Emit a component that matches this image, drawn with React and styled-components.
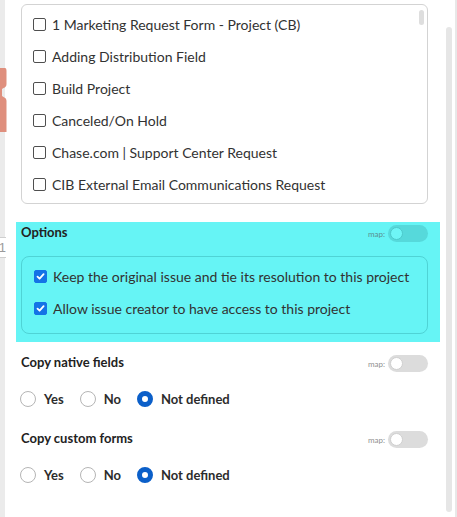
import React from "react";
import styled, { createGlobalStyle } from "styled-components";

const GlobalStyle = createGlobalStyle`
  html, body {
    margin: 0;
    padding: 0;
    background: #ffffff;
  }
  body {
    font-family: Lato, "Noto Sans", sans-serif;
    color: #323232;
  }
`;

const Page = styled.div`
  display: flex;
  width: 457px;
  height: 517px;
  overflow: hidden;
  background: #ffffff;
`;

const Gutter = styled.div`
  position: relative;
  width: 5px;
  flex: none;
  background: #ebebeb;
  display: flex;
  flex-direction: column;
  padding-top: 68px;
  z-index: 1;
`;

const Blob = styled.svg`
  display: block;
  width: 7px;
  height: 64px;
`;

const CutInput = styled.div`
  margin-top: 105px;
  width: 6px;
  height: 21px;
  box-sizing: border-box;
  border-top: 1px solid #cfcfcf;
  border-bottom: 1px solid #cfcfcf;
  background: #ffffff;
  color: #9a9a9a;
  font-family: "Liberation Sans", sans-serif;
  font-size: 13px;
  line-height: 19px;
  display: flex;
  justify-content: flex-end;
  overflow: hidden;
`;

const Panel = styled.div`
  width: 439px;
  flex: none;
  box-sizing: border-box;
  padding: 4px 16px 0 16px;
  display: flex;
  flex-direction: column;
`;

const ListBox = styled.div`
  position: relative;
  height: 200px;
  box-sizing: border-box;
  border: 1px solid #d3d3d3;
  border-radius: 6px;
  padding: 3px 0 2px 11px;
`;

const ListThumb = styled.div`
  position: absolute;
  top: 5px;
  right: 3px;
  width: 5px;
  height: 15px;
  border-radius: 3px;
  background: #dedede;
`;

const CheckRow = styled.label`
  display: flex;
  align-items: center;
  gap: 6px;
  height: 32px;
  font-size: 14px;
  white-space: nowrap;
`;

const Box = styled.span`
  flex: none;
  width: 13px;
  height: 13px;
  box-sizing: border-box;
  border-radius: 2px;
  border: 1px solid ${(p) => (p.$checked ? "#1473e6" : "#4f4f4f")};
  background: ${(p) => (p.$checked ? "#1473e6" : "#ffffff")};
  display: flex;
  align-items: center;
  justify-content: center;
`;

const Highlight = styled.div`
  margin: 18px -12px 0 -5px;
  padding: 3px 12px 8px 5px;
  background: #66f4f5;
`;

const HeaderRow = styled.div`
  display: flex;
  align-items: center;
  justify-content: space-between;
  height: 17px;
  margin-top: ${(p) => p.$top || 0}px;
`;

const Title = styled.div`
  font-size: 13px;
  font-weight: 700;
  color: #222222;
  margin-bottom: 3px;
`;

const MapWrap = styled.div`
  display: flex;
  align-items: center;
  gap: 3px;
`;

const MapLabel = styled.span`
  font-size: 8px;
  color: ${(p) => (p.$hl ? "#5a8f90" : "#8f8f8f")};
`;

const Toggle = styled.div`
  width: 40px;
  height: 17px;
  border-radius: 9px;
  background: ${(p) => (p.$hl ? "#56d9db" : "#dcdcdc")};
  display: flex;
  align-items: center;
  padding-left: 2px;
  box-sizing: border-box;
`;

const Knob = styled.div`
  width: 13px;
  height: 13px;
  border-radius: 50%;
  box-sizing: border-box;
  background: ${(p) => (p.$hl ? "#6ef5f6" : "#ffffff")};
  border: 1px solid ${(p) => (p.$hl ? "#4cc9cb" : "#cfcfcf")};
`;

const InnerBox = styled.div`
  margin-top: 14px;
  height: 78px;
  box-sizing: border-box;
  border: 1px solid #4fd3d5;
  border-radius: 8px;
  padding: 3px 0 0 12px;
`;

const RadioRow = styled.div`
  display: flex;
  align-items: center;
  height: 20px;
  margin: 17px 0 0 -1px;
`;

const RadioItem = styled.label`
  display: flex;
  align-items: center;
  gap: 8px;
  margin-right: 16px;
  font-size: 13px;
  font-weight: 700;
  color: #2c2c2c;
`;

const Circle = styled.span`
  width: 16px;
  height: 16px;
  box-sizing: border-box;
  border-radius: 50%;
  border: ${(p) => (p.$on ? "5px solid #0b5fc9" : "1px solid #b5b5b5")};
  background: #ffffff;
`;

const Scroller = styled.div`
  flex: none;
  width: 13px;
  display: flex;
  justify-content: space-between;
  padding-left: 2px;
  box-sizing: border-box;
`;

const Track = styled.div`
  width: 6px;
  margin: 27px 0 5px;
  border-radius: 3px;
  background: #e6e6e6;
`;

const Line = styled.div`
  width: 2px;
  background: #e8e8e8;
`;

const items = [
  "1 Marketing Request Form - Project (CB)",
  "Adding Distribution Field",
  "Build Project",
  "Canceled/On Hold",
  "Chase.com | Support Center Request",
  "CIB External Email Communications Request",
];

const Check = ({ checked }) => (
  <Box $checked={checked}>
    {checked && (
      <svg width="9" height="9" viewBox="0 0 9 9">
        <path d="M1.5 4.6 L3.6 6.7 L7.6 2.2" fill="none" stroke="#fff" strokeWidth="1.8" strokeLinecap="round" strokeLinejoin="round" />
      </svg>
    )}
  </Box>
);

const MapToggle = ({ hl }) => (
  <MapWrap>
    <MapLabel $hl={hl}>map:</MapLabel>
    <Toggle $hl={hl}>
      <Knob $hl={hl} />
    </Toggle>
  </MapWrap>
);

const Radios = () => (
  <RadioRow>
    <RadioItem><Circle />Yes</RadioItem>
    <RadioItem><Circle />No</RadioItem>
    <RadioItem><Circle $on />Not defined</RadioItem>
  </RadioRow>
);

export default function App() {
  return (
    <>
      <GlobalStyle />
      <Page>
        <Gutter>
          <Blob viewBox="0 0 7 64">
            <path d="M0 0 H5 Q6.5 0 6.5 3 V16 Q6.5 19 3.5 20 L2 21 V28 L3.5 29 Q6.5 30 6.5 33 V64 H0 Z" fill="#df8f7d" />
          </Blob>
          <CutInput>1</CutInput>
        </Gutter>
        <Panel>
          <ListBox>
            <ListThumb />
            {items.map((t) => (
              <CheckRow key={t}>
                <Check />
                {t}
              </CheckRow>
            ))}
          </ListBox>

          <Highlight>
            <HeaderRow>
              <Title>Options</Title>
              <MapToggle hl />
            </HeaderRow>
            <InnerBox>
              <CheckRow>
                <Check checked />
                Keep the original issue and tie its resolution to this project
              </CheckRow>
              <CheckRow>
                <Check checked />
                Allow issue creator to have access to this project
              </CheckRow>
            </InnerBox>
          </Highlight>

          <HeaderRow $top={13}>
            <Title>Copy native fields</Title>
            <MapToggle />
          </HeaderRow>
          <Radios />

          <HeaderRow $top={22}>
            <Title>Copy custom forms</Title>
            <MapToggle />
          </HeaderRow>
          <Radios />
        </Panel>
        <Scroller>
          <Track />
          <Line />
        </Scroller>
      </Page>
    </>
  );
}
